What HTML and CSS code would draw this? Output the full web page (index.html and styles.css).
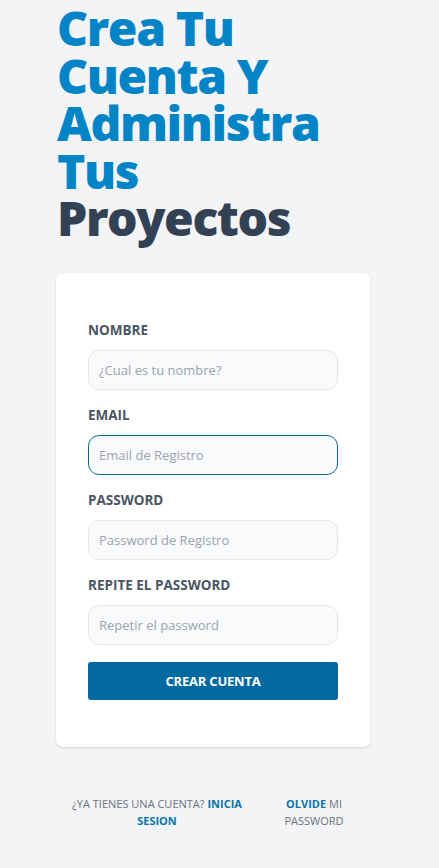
FILE: index.html
```html
<!DOCTYPE html>
<html lang="es">
<head>
<meta charset="utf-8">
<title>Crear cuenta</title>
<link rel="stylesheet" href="styles.css">
</head>
<body>
<main class="page">
  <h1 class="title">Crea Tu Cuenta Y Administra Tus <span class="title-dark">Proyectos</span></h1>
  <form class="card">
    <div class="field">
      <label class="label" for="nombre">Nombre</label>
      <input class="input" id="nombre" type="text" placeholder="¿Cual es tu nombre?">
    </div>
    <div class="field">
      <label class="label" for="email">Email</label>
      <input class="input input-focus" id="email" type="email" placeholder="Email de Registro">
    </div>
    <div class="field">
      <label class="label" for="password">Password</label>
      <input class="input" id="password" type="password" placeholder="Password de Registro">
    </div>
    <div class="field">
      <label class="label" for="password2">Repite el Password</label>
      <input class="input" id="password2" type="password" placeholder="Repetir el password">
    </div>
    <button class="submit" type="button">Crear Cuenta</button>
  </form>
  <nav class="links">
    <a class="link link-left" href="#">¿Ya tienes una cuenta? <strong>Inicia Sesion</strong></a>
    <a class="link link-right" href="#"><strong>Olvide</strong> mi Password</a>
  </nav>
</main>
</body>
</html>
```

FILE: styles.css
```css
* { box-sizing: border-box; }
html, body { margin: 0; padding: 0; }
body {
  background: #f3f4f6;
  font-family: "Open Sans", "Noto Sans", sans-serif;
  color: #4b5563;
}
.page {
  width: 314px;
  margin-left: 56px;
  padding-top: 4px;
}
.title {
  margin: 0;
  font-family: "Open Sans", sans-serif;
  font-weight: 800;
  font-size: 48px;
  line-height: 47.5px;
  color: #0284c7;
  padding-left: 1px;
  letter-spacing: -1.4px;
}
.title-dark { color: #334155; }
.card {
  margin-top: 31px;
  background: #fff;
  border-radius: 7px;
  box-shadow: 0 1px 3px rgba(0,0,0,0.08), 0 1px 2px rgba(0,0,0,0.05);
  padding: 47px 32px 47px;
}
.field { margin-bottom: 15px; }
.label {
  display: block;
  text-transform: uppercase;
  font-weight: 700;
  font-size: 13.5px;
  line-height: 20px;
  color: #4b5563;
  margin-bottom: 10px;
}
.input {
  display: block;
  width: 100%;
  height: 40px;
  border: 1px solid #e5e7eb;
  border-radius: 11px;
  background: #f9fafb;
  padding: 0 10px;
  font-family: "Open Sans", sans-serif;
  font-size: 13px;
  color: #374151;
  outline: none;
}
.input::placeholder { color: #9ca3af; }
.input-focus { border-color: #0e6a94; }
.submit {
  display: block;
  width: 100%;
  height: 38px;
  margin-top: 17px;
  border: 0;
  border-radius: 3px;
  background: #0369a1;
  color: #fff;
  font-family: "Open Sans", sans-serif;
  font-weight: 700;
  font-size: 13px;
  text-transform: uppercase;
  letter-spacing: -0.2px;
}
.links {
  display: flex;
  margin-top: 48px;
}
.link {
  display: block;
  text-align: center;
  text-decoration: none;
  text-transform: uppercase;
  font-size: 11px;
  line-height: 17px;
  color: #6b7280;
}
.link strong { color: #0975ad; font-weight: 700; }
.link-left { flex: 0 0 202px; padding: 0 16px; }
.link-right { flex: 1; padding: 0 24px; }
```
